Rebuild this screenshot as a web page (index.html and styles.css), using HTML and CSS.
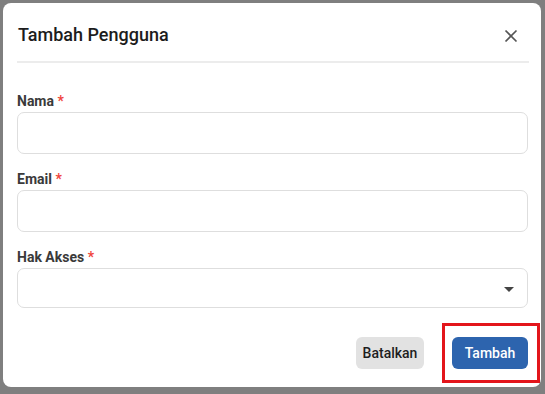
FILE: index.html
```html
<!DOCTYPE html>
<html lang="id">
<head>
  <meta charset="UTF-8">
  <meta name="viewport" content="width=device-width, initial-scale=1.0">
  <title>Tambah Pengguna</title>
  <link rel="stylesheet" href="styles.css">
</head>
<body>
  <div class="overlay">
    <div class="modal">
      <div class="modal-header">
        <h2 class="modal-title">Tambah Pengguna</h2>
        <button class="close-btn" aria-label="Tutup">
          <svg width="14" height="14" viewBox="0 0 14 14">
            <path d="M1.5 1.5 L12.5 12.5 M12.5 1.5 L1.5 12.5" stroke="#555" stroke-width="1.7" fill="none"/>
          </svg>
        </button>
      </div>
      <div class="divider"></div>

      <form class="modal-body">
        <div class="field">
          <label for="nama">Nama <span class="req">*</span></label>
          <input type="text" id="nama">
        </div>
        <div class="field">
          <label for="email">Email <span class="req">*</span></label>
          <input type="email" id="email">
        </div>
        <div class="field">
          <label for="akses">Hak Akses <span class="req">*</span></label>
          <div class="select-box" id="akses">
            <span class="caret"></span>
          </div>
        </div>
      </form>

      <div class="modal-footer">
        <button class="btn btn-cancel">Batalkan</button>
        <button class="btn btn-primary">Tambah <span class="highlight"></span></button>
      </div>
    </div>
  </div>
</body>
</html>
```

FILE: styles.css
```css
body {
  margin: 0;
  padding: 0;
  font-family: Roboto, "Liberation Sans", Arial, sans-serif;
  background-color: #7f7f7f;
}

.overlay {
  width: 545px;
  height: 394px;
  padding: 3px 4px 0 3px;
  box-sizing: border-box;
}

.modal {
  width: 538px;
  height: 384px;
  background-color: #fff;
  border-radius: 8px;
  box-sizing: border-box;
  position: relative;
}

.modal-header {
  display: flex;
  align-items: center;
  justify-content: space-between;
  padding: 20px 0 14px 15px;
}

.modal-title {
  margin: 0;
  font-size: 18px;
  line-height: 24px;
  font-weight: 500;
  color: #1c1c1c;
}

.close-btn {
  border: none;
  background: none;
  padding: 0;
  margin-right: 23px;
  width: 14px;
  height: 14px;
  margin-top: 1px;
  cursor: pointer;
  display: flex;
}

.divider {
  height: 2px;
  background-color: #ececec;
  margin: 0 12px 0 14px;
}

.modal-body {
  padding: 30px 13px 0 14px;
  display: flex;
  flex-direction: column;
  gap: 17px;
}

.field label {
  display: block;
  font-size: 14px;
  line-height: 16px;
  font-weight: 700;
  color: #3a3a3a;
  margin-bottom: 3px;
}

.req {
  color: #f0443c;
}

.field input,
.select-box {
  display: block;
  width: 100%;
  height: 42px;
  box-sizing: border-box;
  border: 1px solid #dedede;
  border-radius: 7px;
  background: #fff;
  outline: none;
}

.select-box {
  height: 40px;
  display: flex;
  align-items: center;
  justify-content: flex-end;
  padding-right: 13px;
}

.caret {
  width: 0;
  height: 0;
  border-left: 5px solid transparent;
  border-right: 5px solid transparent;
  border-top: 5px solid #444;
  margin-top: 2px;
}

.modal-footer {
  display: flex;
  justify-content: flex-end;
  gap: 28px;
  padding: 29px 13px 0 0;
}

.btn {
  height: 32px;
  border: none;
  border-radius: 6px;
  font-family: Roboto, "Liberation Sans", Arial, sans-serif;
  font-size: 14px;
  font-weight: 500;
  padding: 0;
  cursor: pointer;
}

.btn-cancel {
  background-color: #e2e2e2;
  color: #1e1e1e;
  width: 68px;
}

.btn-primary {
  background-color: #2d64ae;
  color: #fff;
  width: 76px;
  position: relative;
}

/* kotak merah penanda */
.highlight {
  position: absolute;
  top: -14px;
  left: -10px;
  right: -12px;
  bottom: -14px;
  border: 3px solid #e3151b;
  pointer-events: none;
}
```
